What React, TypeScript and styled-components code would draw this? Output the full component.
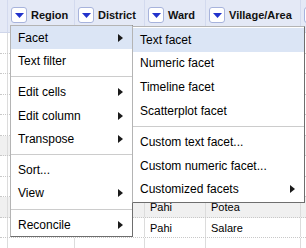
import React from "react";
import styled, { createGlobalStyle } from "styled-components";

const GlobalStyle = createGlobalStyle`
  html, body {
    margin: 0;
    padding: 0;
    background: #fff;
  }
  body {
    font-family: "Liberation Sans", Arial, sans-serif;
  }
`;

const COLS = "7px 67px 70px 61px 95px 60px";

const Viewport = styled.div`
  position: relative;
  width: 306px;
  height: 248px;
  overflow: hidden;
  background: #fff;
`;

const HeaderRow = styled.div`
  display: grid;
  grid-template-columns: ${COLS};
  height: 33px;
  box-sizing: border-box;
  background: #e4e9f6;
  border-bottom: 1px solid #cfd6ea;
`;

const HeaderCell = styled.div`
  display: flex;
  align-items: flex-start;
  gap: 4px;
  padding: 7px 0 0 3px;
  border-left: 1px solid #d3daee;
  white-space: nowrap;
  overflow: hidden;

  &:first-child {
    border-left: none;
    padding: 0;
  }
`;

const DropButton = styled.div`
  flex: none;
  width: 16px;
  height: 16px;
  box-sizing: border-box;
  border: 1px solid #a7b3dc;
  border-radius: 3px;
  background: #fff;
  display: flex;
  align-items: center;
  justify-content: center;
`;

const HeaderLabel = styled.span`
  font-size: 11px;
  font-weight: bold;
  line-height: 16px;
  color: #111;
`;

const Row = styled.div<{ $shade?: boolean }>`
  display: grid;
  grid-template-columns: ${COLS};
  height: 20.5px;
  box-sizing: border-box;
  border-bottom: 1px dotted #c8c8c8;
  background: ${(p) => (p.$shade ? "#f0f0f0" : "#fff")};
`;

const Cell = styled.div`
  border-left: 1px solid #dcdcdc;
  padding-left: 5px;
  font-size: 11px;
  line-height: 20px;
  color: #000;
  white-space: nowrap;
  overflow: hidden;

  &:first-child {
    border-left: none;
  }
`;

const Menu = styled.div<{ $left: number; $top: number; $width: number; $itemH: number }>`
  position: absolute;
  left: ${(p) => p.$left}px;
  top: ${(p) => p.$top}px;
  width: ${(p) => p.$width}px;
  box-sizing: border-box;
  padding: ${(p) => (p.$itemH > 23.4 ? "1px 0" : "0")};
  background: #fff;
  border: 1px solid #b4b4b4;
  border-right-color: #6e6e6e;
  border-bottom-color: #6e6e6e;
  --item-h: ${(p) => p.$itemH}px;
`;

const MenuItem = styled.div<{ $active?: boolean }>`
  display: flex;
  align-items: center;
  justify-content: space-between;
  height: var(--item-h);
  padding: 0 9px 0 7px;
  font-size: 12px;
  color: #000;
  white-space: nowrap;
  background: ${(p) => (p.$active ? "#dbe5f5" : "transparent")};
`;

const Separator = styled.div`
  height: 1px;
  margin: 3.5px 0;
  background: #cccccc;
`;

const DownTriangle = () => (
  <svg width="9" height="5" viewBox="0 0 9 5">
    <polygon points="0,0 9,0 4.5,5" fill="#2233cc" />
  </svg>
);

const RightArrow = () => (
  <svg width="5" height="8" viewBox="0 0 5 8">
    <polygon points="0,0 5,4 0,8" fill="#1a1a1a" />
  </svg>
);

type Entry = { label: string; sub?: boolean; active?: boolean } | "sep";

const mainMenu: Entry[] = [
  { label: "Facet", sub: true, active: true },
  { label: "Text filter" },
  "sep",
  { label: "Edit cells", sub: true },
  { label: "Edit column", sub: true },
  { label: "Transpose", sub: true },
  "sep",
  { label: "Sort..." },
  { label: "View", sub: true },
  "sep",
  { label: "Reconcile", sub: true },
];

const facetMenu: Entry[] = [
  { label: "Text facet", active: true },
  { label: "Numeric facet" },
  { label: "Timeline facet" },
  { label: "Scatterplot facet" },
  "sep",
  { label: "Custom text facet..." },
  { label: "Custom numeric facet..." },
  { label: "Customized facets", sub: true },
];

const columns = ["Region", "District", "Ward", "Village/Area", ""];

const rows: { ward: string; village: string; shade?: boolean }[] = [
  { ward: "", village: "" },
  { ward: "", village: "" },
  { ward: "", village: "" },
  { ward: "", village: "" },
  { ward: "", village: "" },
  { ward: "", village: "", shade: true },
  { ward: "", village: "" },
  { ward: "", village: "" },
  { ward: "Pahi", village: "Potea", shade: true },
  { ward: "Pahi", village: "Salare" },
  { ward: "", village: "" },
];

const renderEntries = (entries: Entry[]) =>
  entries.map((e, i) =>
    e === "sep" ? (
      <Separator key={i} />
    ) : (
      <MenuItem key={i} $active={e.active}>
        <span>{e.label}</span>
        {e.sub && <RightArrow />}
      </MenuItem>
    )
  );

const App: React.FC = () => {
  return (
    <Viewport>
      <GlobalStyle />
      <HeaderRow>
        <HeaderCell />
        {columns.map((c, i) => (
          <HeaderCell key={i}>
            <DropButton>
              <DownTriangle />
            </DropButton>
            {c && <HeaderLabel>{c}</HeaderLabel>}
          </HeaderCell>
        ))}
      </HeaderRow>
      {rows.map((r, i) => (
        <Row key={i} $shade={r.shade}>
          <Cell />
          <Cell />
          <Cell />
          <Cell>{r.ward}</Cell>
          <Cell>{r.village}</Cell>
          <Cell />
        </Row>
      ))}
      <Menu $left={10} $top={25} $width={123} $itemH={23.3}>
        {renderEntries(mainMenu)}
      </Menu>
      <Menu $left={132} $top={26} $width={173} $itemH={23.6}>
        {renderEntries(facetMenu)}
      </Menu>
    </Viewport>
  );
};

export default App;
